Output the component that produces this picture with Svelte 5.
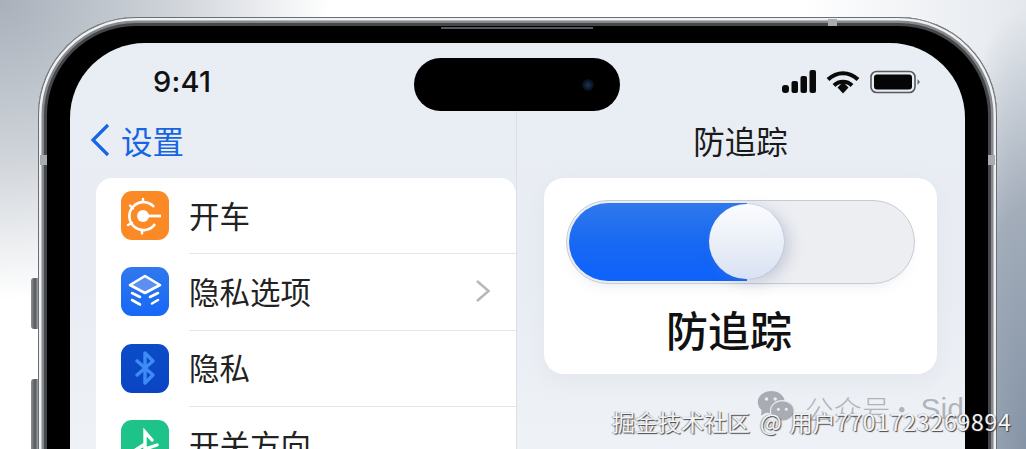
<script>
	const rows = [
		{ label: '开车', kind: 'drive' },
		{ label: '隐私选项', kind: 'layers', chevron: true },
		{ label: '隐私', kind: 'bluetooth' },
		{ label: '开关方向', kind: 'branch' }
	];
</script>

<div class="page">
	<div class="phone">
		<span class="side-btn one"></span>
		<span class="side-btn two"></span>
		<span class="speaker"></span>
		<span class="band left"></span>
		<span class="band top"></span>
		<span class="band right"></span>
		<div class="bezel">
			<div class="screen">
				<div class="status">
					<span class="time">9:41</span>
					<div class="island"><span class="lens"></span></div>
					<div class="status-icons">
						<svg width="34" height="24" viewBox="0 0 34 24">
							<rect x="0" y="15" width="7" height="8" rx="3" fill="#0a0a0a" />
							<rect x="9.5" y="11" width="6.5" height="12" rx="2" fill="#0a0a0a" />
							<rect x="18.5" y="6" width="6.5" height="17" rx="2" fill="#0a0a0a" />
							<rect x="27.5" y="0" width="6.5" height="23" rx="2" fill="#0a0a0a" />
						</svg>
						<svg width="34" height="24" viewBox="0 0 34 24" fill="none">
							<path d="M2 9.5C11 1 23 1 32 9.5" stroke="#0a0a0a" stroke-width="4" />
							<path d="M8 15.5C13 10.5 21 10.5 26 15.5" stroke="#0a0a0a" stroke-width="4" />
							<path d="M11.5 18 17 12.5 22.500 18 17 24Z" fill="#0a0a0a" transform="translate(0 -0.500)" />
						</svg>
						<svg width="51" height="24" viewBox="0 0 51 24" fill="none">
							<rect x="1" y="1.500" width="44" height="21" rx="5.500" stroke="#55585c" stroke-width="1.600" />
							<rect x="4" y="4.500" width="38" height="15" rx="3" fill="#050505" />
							<path d="M47.500 9 50 12 47.500 15Z" fill="#66696d" />
						</svg>
					</div>
				</div>

				<div class="panes">
					<section class="pane list-pane">
						<div class="nav back">
							<svg width="21" height="34" viewBox="0 0 21 34" fill="none">
								<path d="M18 2 3 17 18 32" stroke="#1565e4" stroke-width="3.200" />
							</svg>
							<span>设置</span>
						</div>
						<div class="list">
							{#each rows as row}
								<div class="row">
									<div class="app-icon {row.kind}">
										{#if row.kind === 'drive'}
											<svg width="48" height="48" viewBox="0 0 48 48" fill="none" stroke="#fff">
												<circle cx="22" cy="24" r="6" fill="#fff" stroke="none" />
												<path d="M33 15A14 14 0 1 0 34 32" stroke-width="2.600" />
												<path d="M22 24H40" stroke-width="2.800" />
												<path d="M9 13.500l3 3M7 33l4-2M21 39v2.500M22 7V9" stroke-width="2.400" stroke-linecap="round" />
											</svg>
										{:else if row.kind === 'layers'}
											<svg width="48" height="48" viewBox="0 0 48 48" fill="none" stroke="#fff" stroke-linecap="round">
												<path d="M24 8 39 17 24 25 9 17Z" fill="#5d8ff0" stroke-width="2.600" stroke-linejoin="round" />
												<path d="M11 25l8 4M37 25l-8 4M11 32l8 4.500M37 32l-6 3.500" stroke-width="2.600" />
											</svg>
										{:else if row.kind === 'bluetooth'}
											<svg width="48" height="48" viewBox="0 0 48 48" fill="none" stroke="#3f8bf6" stroke-width="3.400" stroke-linejoin="round">
												<path d="M15 16 32 31 24 39V9L32 17 15 32" />
											</svg>
										{:else}
											<svg width="48" height="48" viewBox="0 0 48 48" fill="none" stroke="#fff" stroke-width="3.400" stroke-linecap="round">
												<path d="M24 36V12L31 20M24 24 13 31M24 29 36 25M24 34 33 38M13 37l6 2" />
											</svg>
										{/if}
									</div>
									<div class="row-body">
										<span>{row.label}</span>
										{#if row.chevron}
											<svg width="16" height="24" viewBox="0 0 16 24" fill="none">
												<path d="M2 2 13.500 12 2 22" stroke="#b5b8bd" stroke-width="2.600" />
											</svg>
										{/if}
									</div>
								</div>
							{/each}
						</div>
					</section>

					<section class="pane detail-pane">
						<div class="nav title">防追踪</div>
						<div class="card">
							<div class="toggle">
								<div class="fill"></div>
								<div class="knob"></div>
							</div>
							<div class="card-label">防追踪</div>
						</div>
					</section>
				</div>
			</div>
		</div>
	</div>

	<div class="wechat-mark">
		<svg width="38" height="31" viewBox="0 0 48 39">
			<ellipse cx="18" cy="14" rx="17" ry="14" fill="#a9adb3" />
			<path d="M6 22 5 31 14 26Z" fill="#a9adb3" />
			<ellipse cx="32" cy="25" rx="15" ry="13" fill="#a9adb3" stroke="#e8ecf2" stroke-width="1.500" />
			<circle cx="12" cy="10" r="2.200" fill="#e8ecf2" />
			<circle cx="23" cy="10" r="2.200" fill="#e8ecf2" />
			<circle cx="27" cy="23" r="1.900" fill="#e8ecf2" />
			<circle cx="37" cy="23" r="1.900" fill="#e8ecf2" />
		</svg>
		<span class="cn">公众号</span>
		<span class="dot">·</span>
		<span class="latin">Sid</span>
	</div>
	<div class="juejin-mark">掘金技术社区<span class="at">@</span>用户<span class="digits">7701723269894</span></div>
</div>

<style>
	:global(body) {
		margin: 0;
		overflow: hidden;
	}

	.page {
		position: relative;
		width: 1026px;
		height: 449px;
		overflow: hidden;
		padding: 17px 0 0 38px;
		box-sizing: border-box;
		background:
			radial-gradient(ellipse 100px 440px at 100% 100%, #8493a6 0, #a3adba 55%, rgba(228, 232, 237, 0) 100%),
			radial-gradient(ellipse 330px 300px at 0 0, #a9b0ba 0, #cdd2d8 50%, rgba(255, 255, 255, 0) 100%),
			linear-gradient(90deg, #fff 0, #fff 78%, #e4e8ed 100%);
		font-family: 'Noto Sans CJK SC', 'Liberation Sans', sans-serif;
	}

	.phone {
		position: relative;
		width: 959px;
		height: 640px;
		box-sizing: border-box;
		padding: 9px 9px 0;
		border-radius: 98px 98px 0 0;
		background: #3b3d40;
		box-shadow:
			inset 0 0 0 1px #6b6e72,
			inset 0 0 0 3.5px #eef0f2,
			inset 0 0 0 6px #85888c,
			inset 0 0 0 9px #45474a;
	}

	.band {
		position: absolute;
		background: #a8abaf;
	}

	.band.left {
		left: 2px;
		top: 138px;
		width: 7px;
		height: 10px;
	}

	.band.right {
		right: 2px;
		top: 138px;
		width: 7px;
		height: 10px;
	}

	.band.top {
		left: 790px;
		top: 2px;
		width: 9px;
		height: 7px;
	}

	.side-btn {
		position: absolute;
		left: -7px;
		width: 7px;
		background: linear-gradient(90deg, #8c8f93, #54575b 60%, #a0a3a7);
		border-radius: 3px 0 0 3px;
	}

	.side-btn.one {
		top: 261px;
		height: 51px;
	}

	.side-btn.two {
		top: 362px;
		height: 80px;
	}

	.speaker {
		position: absolute;
		top: 10px;
		left: 403px;
		width: 152px;
		height: 2px;
		background: #55585c;
	}

	.bezel {
		height: 100%;
		box-sizing: border-box;
		padding: 17px 23px 0;
		background: #000;
		border-radius: 89px 89px 0 0;
	}

	.screen {
		height: 100%;
		display: flex;
		flex-direction: column;
		background: linear-gradient(180deg, #e9edf4 0, #e9edf3 240px, #eef1f6 400px);
		border-radius: 75px 75px 0 0;
	}

	.status {
		height: 68px;
		flex: none;
		display: flex;
		justify-content: space-between;
		padding: 0 44px 0 83px;
		position: relative;
	}

	.time {
		font-family: 'Inter', 'Liberation Sans', sans-serif;
		font-size: 29px;
		font-weight: 500;
		line-height: 35px;
		color: #111;
		margin-top: 21px;
		letter-spacing: 0.2px;
	}

	.island {
		position: absolute;
		top: 15px;
		left: 344px;
		width: 206px;
		height: 53px;
		border-radius: 27px;
		background: #000;
	}

	.lens {
		position: absolute;
		left: 168px;
		top: 21px;
		width: 12px;
		height: 12px;
		border-radius: 50%;
		background: radial-gradient(circle, #1c3558 0, #0c1526 50%, #000 100%);
	}

	.status-icons {
		display: flex;
		align-items: flex-start;
		gap: 10px;
		margin-top: 27px;
	}

	.panes {
		flex: 1;
		display: flex;
	}

	.pane {
		flex: none;
	}

	.list-pane {
		width: 447px;
		box-sizing: border-box;
		padding-left: 26px;
		border-right: 1px solid #dcdfe6;
	}

	.detail-pane {
		width: 448px;
		box-sizing: border-box;
		padding: 0 28px 0 27px;
	}

	.nav {
		height: 67px;
		display: flex;
		align-items: center;
		font-size: 31.500px;
		line-height: 46px;
		padding-bottom: 9px;
		box-sizing: border-box;
	}

	.back {
		color: #1565e4;
		gap: 10px;
		margin-left: -6px;
		padding-bottom: 9px;
	}

	.title {
		justify-content: center;
		color: #1a1a1a;
	}

	.list {
		background: #fff;
		border-radius: 16px 16px 0 0;
	}

	.row {
		height: 76.300px;
		display: flex;
		padding-left: 25px;
		gap: 20px;
	}

	.app-icon {
		width: 48px;
		height: 49px;
		flex: none;
		margin-top: 13px;
		border-radius: 11px;
		display: flex;
		align-items: center;
		justify-content: center;
	}

	.drive {
		background: #fb8a26;
	}

	.layers {
		background: linear-gradient(180deg, #3078ee, #1668f6);
	}

	.bluetooth {
		background: linear-gradient(180deg, #0b4cc8, #0a44c4);
	}

	.branch {
		background: #1ec389;
	}

	.row-body {
		flex: 1;
		display: flex;
		align-items: center;
		justify-content: space-between;
		padding: 0 25px 2px 0;
		font-size: 30.500px;
		color: #222;
		border-bottom: 1.500px solid #e3e5ea;
	}

	.card {
		height: 196px;
		background: #fff;
		border-radius: 20px;
		box-sizing: border-box;
		padding: 22px 22px 0;
		display: flex;
		flex-direction: column;
		box-shadow: 0 6px 20px rgba(190, 198, 212, 0.2);
	}

	.toggle {
		position: relative;
		height: 84px;
		box-sizing: border-box;
		border: 1.500px solid #c6cbd6;
		border-radius: 42px;
		background: #eceef2;
		padding: 2px;
		flex: none;
		box-shadow: 0 8px 14px -8px rgba(170, 180, 200, 0.35);
	}

	.fill {
		width: 178px;
		height: 100%;
		border-radius: 40px 0 0 40px;
		background: linear-gradient(180deg, #2f78ec 0, #1668f4 55%, #0f62fb 100%);
	}

	.knob {
		position: absolute;
		top: 3px;
		left: 142px;
		width: 75px;
		height: 75px;
		border-radius: 50%;
		background: linear-gradient(180deg, #fbfcfe 0, #e9eef7 55%, #d8e2f3 100%);
		box-shadow: 0 0 1px #4a7fe0, 6px 4px 14px rgba(120, 130, 160, 0.3);
	}

	.card-label {
		margin: 16px 23px 0 0;
		text-align: center;
		font-size: 42px;
		font-weight: 500;
		line-height: 58px;
		color: #111;
	}

	.wechat-mark {
		position: absolute;
		left: 757px;
		top: 391px;
		display: flex;
		color: rgba(160, 164, 170, 0.8);
		font-size: 28.500px;
		line-height: 36px;
		white-space: nowrap;
		font-weight: 300;
	}

	.cn {
		margin-left: 10px;
	}

	.dot {
		margin-left: -3px;
		width: 16px;
		text-align: center;
	}

	.latin {
		margin-left: 17px;
		font-family: 'Liberation Sans', sans-serif;
		font-size: 30px;
	}

	.juejin-mark {
		position: absolute;
		left: 612px;
		top: 404px;
		font-size: 23px;
		line-height: 34px;
		white-space: nowrap;
		color: #f3f4f6;
		text-shadow: 1px 1px 1px rgba(40, 40, 40, 0.85), -1px 0 1px rgba(60, 60, 60, 0.45);
	}

	.at {
		margin: 0 8px 0 10px;
	}

	.digits {
		letter-spacing: 0.750px;
	}
</style>
